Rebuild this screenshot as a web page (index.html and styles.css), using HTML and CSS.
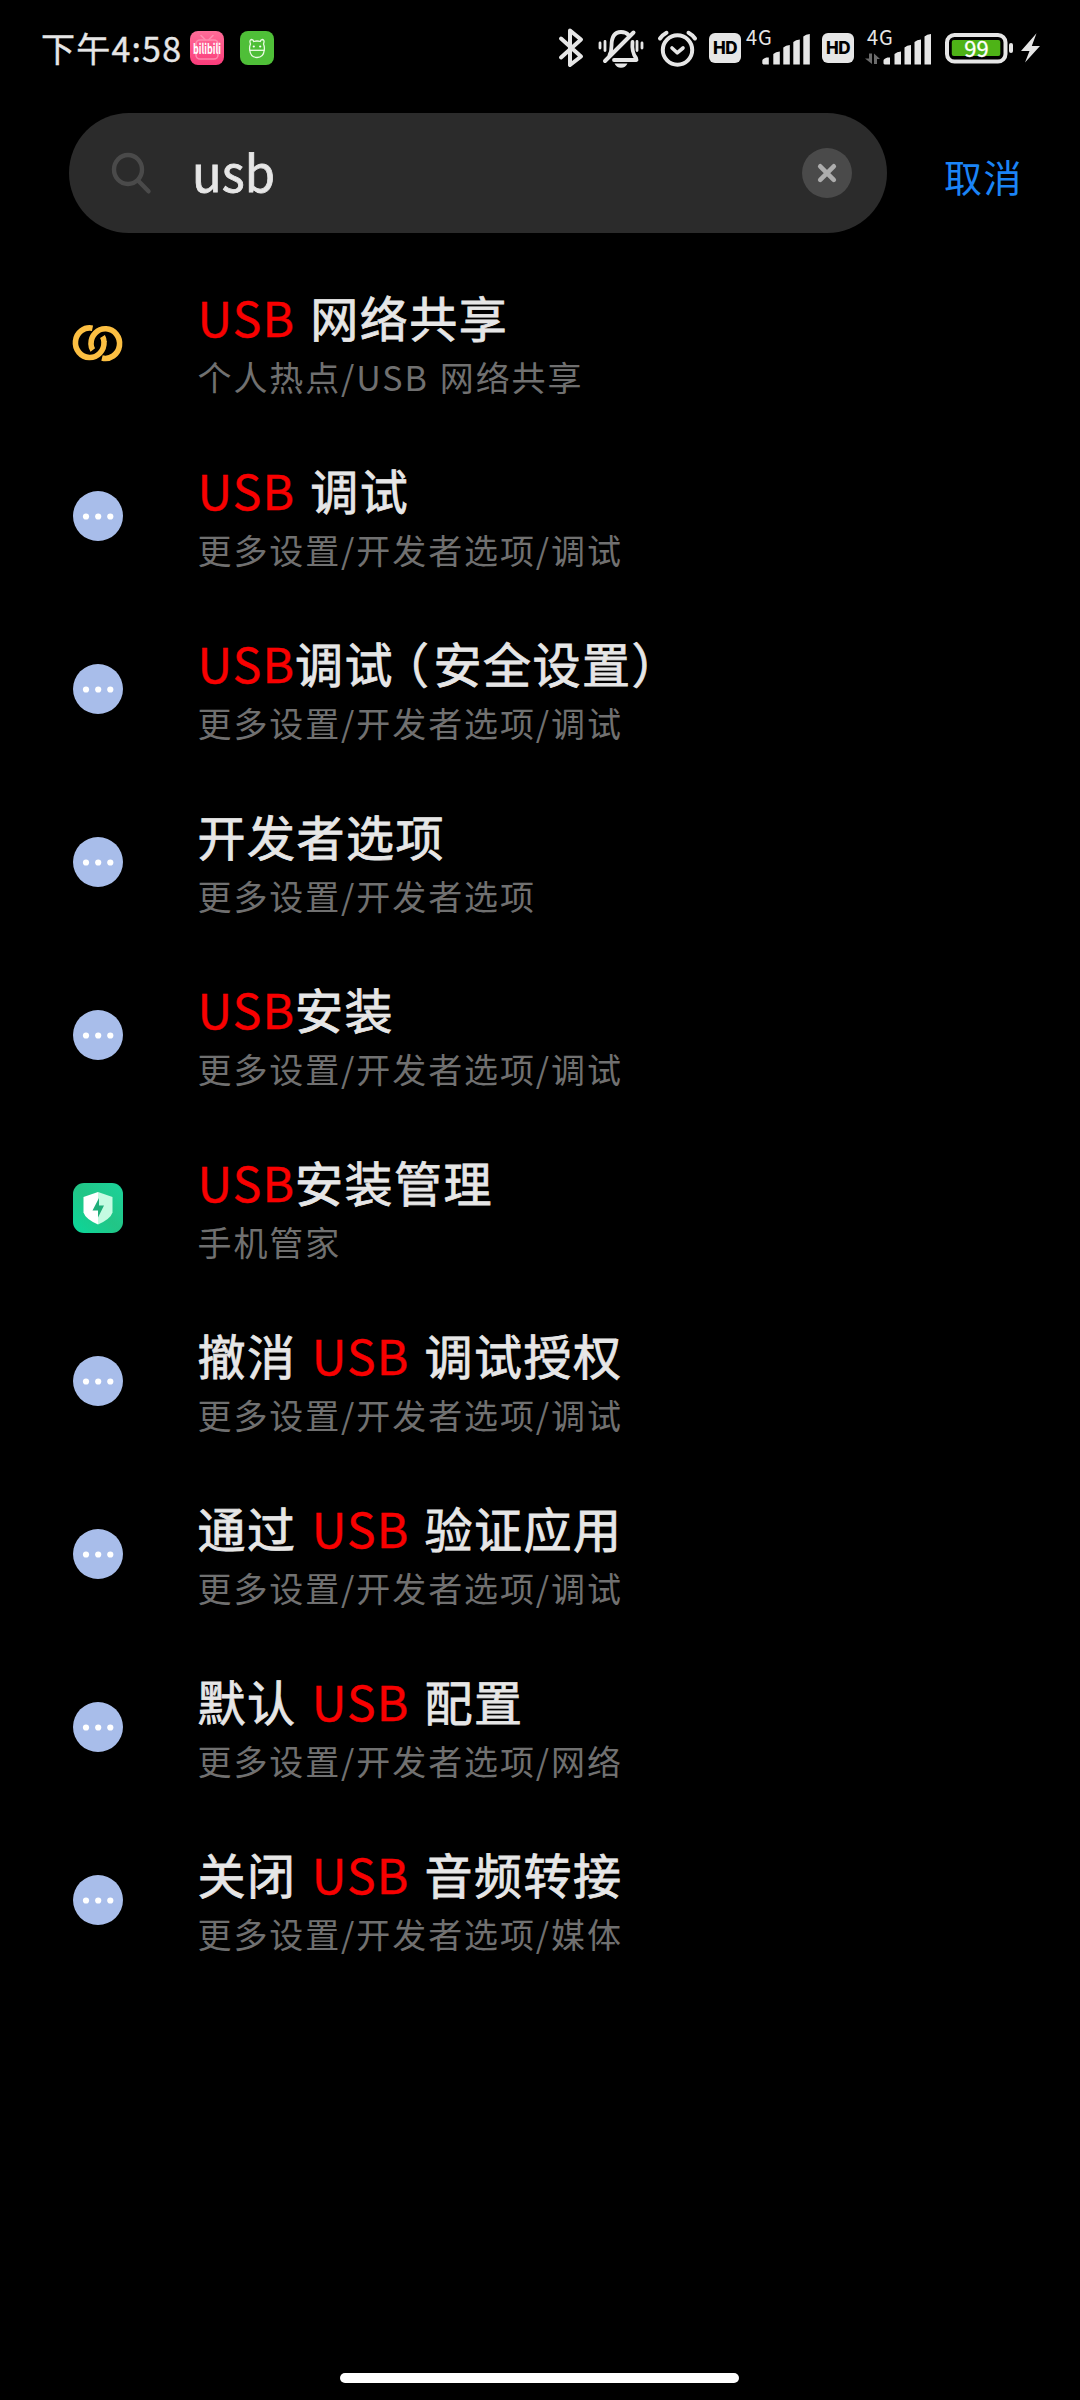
FILE: index.html
```html
<!DOCTYPE html>
<html lang="zh-CN">
<head>
<meta charset="utf-8">
<title>设置搜索</title>
<link rel="stylesheet" href="styles.css">
</head>
<body>
<svg class="defs" width="0" height="0" aria-hidden="true">
  <symbol id="more" viewBox="0 0 50 50">
    <circle cx="25" cy="25" r="25" fill="#a8bdea"/>
    <g fill="#fff"><circle cx="13" cy="25.5" r="3.1"/><circle cx="25.2" cy="25.5" r="3.1"/><circle cx="37.3" cy="25.5" r="3.1"/></g>
  </symbol>
</svg>
<div class="screen">
  <header class="status">
    <div class="status-left">
      <span class="time">下午4:58</span>
      <svg class="app" viewBox="0 0 34 34">
        <defs><linearGradient id="pink" x1="0" y1="0" x2="0" y2="1"><stop offset="0" stop-color="#ff6d98"/><stop offset="1" stop-color="#fb3c7b"/></linearGradient></defs>
        <rect width="34" height="34" rx="8" fill="url(#pink)"/>
        <g fill="none" stroke="#ff9dbb" stroke-width="1.6" opacity=".75" stroke-linecap="round"><rect x="6" y="9" width="22" height="19" rx="4"/><path d="M11 4.500l4 4M23 4.500l-4 4"/></g>
        <text x="3" y="22.500" class="bili" textLength="28" lengthAdjust="spacingAndGlyphs">bilibili</text>
      </svg>
      <svg class="app" viewBox="0 0 34 34">
        <rect width="34" height="34" rx="8" fill="#4fbf38"/>
        <g fill="none" stroke="#e9fbe2" stroke-width="1.300" stroke-linejoin="round"><path d="M10.500 13q-1.500-4 1-4.500q1.800 0 2.200 2q3.300-1 6.600 0q.4-2 2.200-2q2.500.5 1 4.500q1.200 2.500.8 6q-.8 7.500-7.300 7.500t-7.300-7.500q-.4-3.500.8-6z"/><path d="M9.500 19.300h15"/></g>
        <circle cx="13.800" cy="15.500" r="1.100" fill="#fff"/><circle cx="20.200" cy="15.500" r="1.100" fill="#fff"/>
      </svg>
    </div>
    <div class="status-right">
      <svg class="bt" width="25" height="40" viewBox="559 28 25 40"><path d="M561 38.500L581 56.500L570 65V30.500L581 39.500L561 57.500" fill="none" stroke="#e6e6e6" stroke-width="4" stroke-linejoin="round" stroke-linecap="round"/></svg>
      <svg class="bell" width="46" height="40" viewBox="598 29 46 40">
        <g fill="none" stroke="#e6e6e6" stroke-linecap="round" stroke-linejoin="round">
          <path d="M609.500 55Q611.500 51.500 611.500 46Q611.500 32 621 32Q626 32 628.500 35M632.500 42Q631.500 52 636 58L636.500 60H614" stroke-width="3.800"/>
          <path d="M633.500 32.500L605 61" stroke-width="4"/>
          <path d="M600 43v5M605 41.500v9M637 41.500v9M642 43v5" stroke-width="2.800"/>
        </g>
        <path d="M614.500 63.500h13q-2 4.200-6.500 4.200t-6.500-4.200z" fill="#e6e6e6"/>
      </svg>
      <svg class="alarm" width="41" height="39" viewBox="657 28 41 39"><g fill="none" stroke="#e6e6e6" stroke-linecap="round" stroke-linejoin="round"><circle cx="677.500" cy="49" r="14.700" stroke-width="4"/><path d="M672 47l5.200 4.800l5.800-4.800" stroke-width="3.600"/><path d="M660 37.500Q662.500 34 666.500 31.800M695 37.500Q692.500 34 688.500 31.800" stroke-width="4"/></g></svg>
      <span class="hd">HD</span>
      <svg class="sig1" width="65" height="36" viewBox="746 29 65 36">
        <text x="746" y="44" class="net">4G</text>
        <path fill="#e6e6e6" d="M762.300 62.500v-3q0-1.500 4-3h2.500v7h-5.500zM773.300 53q2.500-2.500 6.500-2.500v13h-6.500zM783.300 46.500q2.500-2.500 6.500-2.500v19.500h-6.500zM793.300 41q2.500-2.500 6.500-2.500v25h-6.500zM803.300 35.500q2.500-2.500 6.500-2.500v30.500h-6.500z"/>
      </svg>
      <span class="hd">HD</span>
      <svg class="sig2" width="67" height="36" viewBox="865 29 67 36">
        <text x="867" y="44" class="net">4G</text>
        <path fill="#6b6b6b" d="M869 52.500h3v10.500l-7-5.500h4zM874 63v-10.500l6 5.500h-3v5z"/>
        <g transform="translate(121.200 0)"><path fill="#e6e6e6" d="M762.300 62.500v-3q0-1.500 4-3h2.500v7h-5.500zM773.300 53q2.500-2.500 6.500-2.500v13h-6.500zM783.300 46.500q2.500-2.500 6.500-2.500v19.500h-6.500zM793.300 41q2.500-2.500 6.500-2.500v25h-6.500zM803.300 35.500q2.500-2.500 6.500-2.500v30.500h-6.500z"/></g>
      </svg>
      <svg class="battery" width="69" height="32" viewBox="945 32 69 32">
        <rect x="947" y="35" width="58.500" height="26.500" rx="7.500" fill="none" stroke="#e6e6e6" stroke-width="4"/>
        <rect x="951.800" y="40" width="48.500" height="16" rx="2" fill="#4eb317"/>
        <rect x="1009" y="43" width="4" height="10" rx="2" fill="#e6e6e6"/>
        <text x="976.500" y="56.500" class="pct">99</text>
      </svg>
      <svg class="bolt" width="20" height="30" viewBox="1021 33 20 30"><path d="M1036.500 33.300L1021 51h8.500L1025 62.500L1040 46h-8.200z" fill="#e6e6e6"/></svg>
    </div>
  </header>

  <div class="search">
    <div class="field">
      <svg class="lens" width="42" height="44" viewBox="110 151 42 44"><g fill="none" stroke="#4a4a4a" stroke-width="4.400" stroke-linecap="round"><ellipse cx="128" cy="169.500" rx="14" ry="14.500"/><path d="M138 180.500l10.500 10.800"/></g></svg>
      <span class="query">usb</span>
      <svg class="clear" width="50" height="50" viewBox="0 0 50 50"><circle cx="25" cy="25" r="25" fill="#4a4a4a"/><path d="M18.200 18.300l13.600 13.600M31.800 18.300L18.200 31.900" stroke="#adadad" stroke-width="4.600" stroke-linecap="round"/></svg>
    </div>
    <span class="cancel">取消</span>
  </div>

  <ul class="results">
    <li class="row">
      <svg class="icon" viewBox="0 0 50 50"><g fill="none" stroke="#fcbf42" stroke-width="5.600"><path d="M19.500 10.200A14.300 14.800 0 1 0 31 24Q31 21 29.500 18.500"/><path d="M29 40A14.300 14.800 0 1 0 18 26Q18 29.500 19.800 32"/></g></svg>
      <div class="text"><div class="title"><em>USB</em> 网络共享</div><div class="path">个人热点/USB 网络共享</div></div>
    </li>
    <li class="row"><svg class="icon"><use href="#more"/></svg><div class="text"><div class="title"><em>USB</em> 调试</div><div class="path">更多设置/开发者选项/调试</div></div></li>
    <li class="row"><svg class="icon"><use href="#more"/></svg><div class="text"><div class="title"><em>USB</em>调试<span class="paren">（</span>安全设置<span class="paren-end">）</span></div><div class="path">更多设置/开发者选项/调试</div></div></li>
    <li class="row"><svg class="icon"><use href="#more"/></svg><div class="text"><div class="title">开发者选项</div><div class="path">更多设置/开发者选项</div></div></li>
    <li class="row"><svg class="icon"><use href="#more"/></svg><div class="text"><div class="title"><em>USB</em>安装</div><div class="path">更多设置/开发者选项/调试</div></div></li>
    <li class="row">
      <svg class="icon" viewBox="0 0 50 50">
        <defs><linearGradient id="green" x1="0" y1="1" x2="1" y2="0"><stop offset="0" stop-color="#0ad89b"/><stop offset=".5" stop-color="#22c586"/><stop offset="1" stop-color="#1bd39b"/></linearGradient></defs>
        <rect width="50" height="50" rx="11" fill="url(#green)"/>
        <path d="M25 9L10.500 14v15.500Q12.500 36 25 41.500z" fill="#fff"/><path d="M25 9l14.500 5v15.500Q37.500 36 25 41.500z" fill="#c5fbe2"/>
        <path d="M26 15L19.500 27.500H25V34.500L31 22.500H26z" fill="#1fae7a"/>
      </svg>
      <div class="text"><div class="title"><em>USB</em>安装管理</div><div class="path">手机管家</div></div>
    </li>
    <li class="row"><svg class="icon"><use href="#more"/></svg><div class="text"><div class="title">撤消 <em>USB</em> 调试授权</div><div class="path">更多设置/开发者选项/调试</div></div></li>
    <li class="row"><svg class="icon"><use href="#more"/></svg><div class="text"><div class="title">通过 <em>USB</em> 验证应用</div><div class="path">更多设置/开发者选项/调试</div></div></li>
    <li class="row"><svg class="icon"><use href="#more"/></svg><div class="text"><div class="title">默认 <em>USB</em> 配置</div><div class="path">更多设置/开发者选项/网络</div></div></li>
    <li class="row"><svg class="icon"><use href="#more"/></svg><div class="text"><div class="title">关闭 <em>USB</em> 音频转接</div><div class="path">更多设置/开发者选项/媒体</div></div></li>
  </ul>
  <div class="home"></div>
</div>
</body>
</html>
```
FILE: styles.css
```css
* { box-sizing: border-box; }
body { margin: 0; background: #000; }
.defs { display: none; }
.screen {
  width: 1080px;
  height: 2400px;
  display: flex;
  flex-direction: column;
  background: #000;
  color: #e6e6e6;
  font-family: "Noto Sans CJK SC", sans-serif;
  overflow: hidden;
}
svg { display: block; flex: none; overflow: visible; }

.status {
  height: 96px;
  padding: 0 39px 0 41px;
  display: flex;
  justify-content: space-between;
  align-items: center;
  flex: none;
}
.status-left, .status-right { display: flex; align-items: center; height: 96px; }
.time { width: 149px; font-size: 34px; line-height: 50px; letter-spacing: 1.2px; white-space: nowrap; -webkit-text-stroke: .4px #e6e6e6; }
.app { width: 34px; height: 34px; }
.app + .app { margin-left: 16px; }
.bili { font: 700 14px "Noto Sans CJK SC", sans-serif; fill: #fff; }
.bell { margin: 2px 13px 0 14px; }
.alarm { margin-right: 11px; }
.hd {
  width: 32px;
  height: 30px;
  border-radius: 6px;
  background: #e6e6e6;
  color: #000;
  font: 800 17px/30px Inter, sans-serif;
  letter-spacing: -.5px;
  text-align: center;
}
.sig1 { margin: 0 11px 0 5px; }
.sig2 { margin: 0 13px 0 11px; }
.net { font: 400 20px "Noto Sans CJK SC", sans-serif; fill: #e6e6e6; letter-spacing: .8px; }
.pct { font: 400 22px "Noto Sans CJK SC", sans-serif; fill: #fff; text-anchor: middle; stroke: #fff; stroke-width: .3px; }
.bolt { margin-left: 7px; }

.search {
  display: flex;
  align-items: center;
  padding: 17px 0 0 69px;
  flex: none;
}
.field {
  width: 818px;
  height: 120px;
  border-radius: 60px;
  background: #2b2b2b;
  display: flex;
  align-items: center;
  padding: 0 35px 0 41px;
}
.query { flex: 1; padding-left: 40px; font-size: 49px; line-height: 70px; margin-top: -5px; -webkit-text-stroke: .8px #e6e6e6; }
.cancel { margin-left: 57px; font-size: 38px; line-height: 54px; letter-spacing: 1.4px; color: #1b84f6; padding-top: 5px; }

.results { list-style: none; margin: 23px 0 0; padding: 0; flex: 1; }
.row { height: 173px; display: flex; align-items: center; padding-left: 72.5px; }
.icon { width: 50px; height: 50px; }
.text { margin-left: 75px; white-space: nowrap; }
.title { padding-top: 2px; font-size: 48px; line-height: 60px; letter-spacing: 1.5px; word-spacing: 3px; -webkit-text-stroke: .8px; }
.title em { font-style: normal; color: #f80000; letter-spacing: 1.1px; -webkit-text-stroke: .4px; }
.paren, .paren-end { font-feature-settings: "halt"; }
.paren { margin: 0 3px 0 11px; }
.path { margin-top: 6px; font-size: 34px; line-height: 50px; letter-spacing: 1.9px; word-spacing: 1.5px; color: #707070; }

.home { width: 399px; height: 10px; border-radius: 5px; background: #fff; margin: 0 0 17px 340px; flex: none; }
```
